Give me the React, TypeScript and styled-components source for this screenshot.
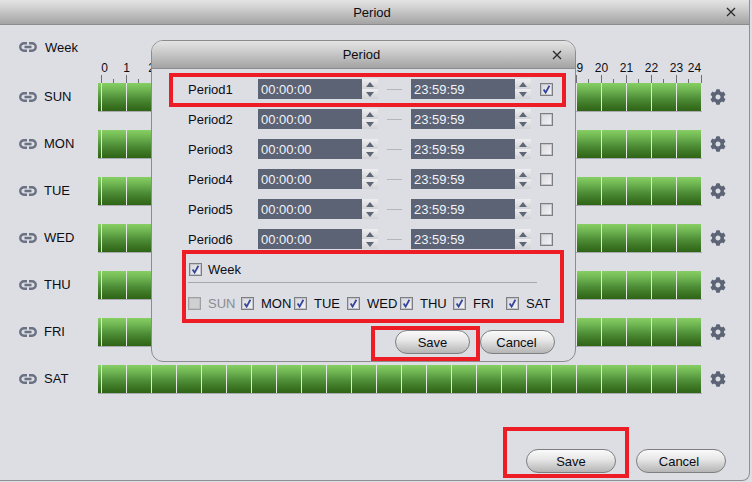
import React from "react";
import styled, { createGlobalStyle } from "styled-components";
import { FaCog } from "react-icons/fa";

const Global = createGlobalStyle`
  html, body { margin: 0; padding: 0; background: #dcdee3; }
  body { font-family: "Liberation Sans", Arial, sans-serif; font-size: 13px; color: #0c0c14; overflow: hidden; }
`;

const titleGradient = "linear-gradient(180deg, #e4e4e4 0%, #cfcfcf 35%, #a3a3a3 100%)";

const Window = styled.div`
  position: relative;
  width: 752px;
  height: 482px;
  overflow: hidden;
  box-sizing: border-box;
  background: #dcdee3;
`;
const Frame = styled.div`
  height: 481px;
  width: 750px;
  box-sizing: border-box;
  border-right: 1px solid #8f9094;
  border-bottom: 1px solid #8f9094;
  border-bottom-right-radius: 8px;
`;
const TitleBar = styled.div<{ $h: number; $inset: number }>`
  height: ${(p) => p.$h}px;
  box-sizing: border-box;
  border-bottom: 1px solid #8c8c8c;
  background: ${titleGradient};
  display: flex;
  align-items: center;
  justify-content: center;
  position: relative;
  padding-right: ${(p) => p.$inset}px;
  font-size: 13px;
`;
const Close = styled.svg<{ $right: number }>`
  position: absolute;
  right: ${(p) => p.$right}px;
  top: 50%;
  margin-top: -5px;
  width: 10px;
  height: 10px;
`;
const Main = styled.div`
  padding: 12px 0 0 19px;
`;
const WeekRow = styled.div`
  display: flex;
  align-items: center;
  height: 20px;
  font-size: 13px;
  gap: 8px;
`;
const LinkSvg = styled.svg`
  flex: none;
  width: 18px;
  height: 10px;
  color: #6a7182;
`;
const Ruler = styled.div`
  display: flex;
  margin: 1px 0 0 70px;
  height: 25px;
`;
const RulerCell = styled.div<{ $shift: number }>`
  width: 25px;
  flex: none;
  position: relative;
  height: 25px;
  box-sizing: border-box;
  padding-top: 3px;
  text-align: center;
  font-size: 12px;
  line-height: 14px;
  & > span {
    position: relative;
    left: ${(p) => p.$shift}px;
    display: block;
  }
`;
const Tick = styled.i`
  position: absolute;
  left: 12px;
  bottom: 0;
  height: 8px;
  width: 1px;
  background: #6b6f78;
`;
const MinorTick = styled.i`
  position: absolute;
  left: 24px;
  bottom: 0;
  height: 4px;
  width: 1px;
  background: #6b6f78;
`;
const Days = styled.div`
  display: flex;
  flex-direction: column;
  gap: 18px;
`;
const DayRow = styled.div`
  display: flex;
  align-items: center;
  height: 29px;
`;
const DayLabel = styled.div`
  width: 60px;
  display: flex;
  align-items: center;
  gap: 7px;
  flex: none;
  margin: 0 19px 2px 0;
  font-size: 13px;
  white-space: nowrap;
`;
const Bar = styled.div`
  display: flex;
  height: 28px;
  border-bottom: 1px solid #a9abb0;
  width: 604px;
  flex: none;
`;
const greenGradient = "linear-gradient(180deg, #86cf63 0%, #6fb552 25%, #4f8f38 55%, #3c7523 80%, #2f6416 100%)";
const Stub = styled.div`
  width: 3px;
  background: ${greenGradient};
`;
const Cell = styled.div`
  width: 24px;
  border-left: 1px solid #e4e6e2;
  background: ${greenGradient};
`;
const Gear = styled(FaCog)`
  margin: 0 0 2px 8px;
  width: 16px;
  height: 16px;
  color: #5c6476;
`;
const Footer = styled.div`
  display: flex;
  justify-content: flex-end;
  gap: 20px;
  margin: 55px 23px 0 0;
`;
const Button = styled.div<{ $w: number; $nudge?: number }>`
  width: ${(p) => p.$w}px;
  height: 24px;
  box-sizing: border-box;
  border: 1px solid #7f7f7f;
  border-radius: 12px;
  padding-right: ${(p) => p.$nudge ?? 0}px;
  background: linear-gradient(180deg, #fafafa 0%, #e8e8e8 40%, #b5b5b5 100%);
  display: flex;
  align-items: center;
  justify-content: center;
  font-size: 13px;
`;
const Dialog = styled.div`
  position: absolute;
  left: 151px;
  top: 40px;
  width: 425px;
  height: 322px;
  box-sizing: border-box;
  border: 1px solid #8c8c8c;
  border-radius: 12px;
  background: #dcdee3;
  overflow: hidden;
`;
const DialogBody = styled.div`
  padding: 5px 0 0 36px;
`;
const PeriodRow = styled.div`
  display: flex;
  align-items: center;
  height: 30px;
`;
const PeriodLabel = styled.div`
  width: 70px;
  flex: none;
  font-size: 13px;
`;
const TimeField = styled.div`
  width: 104px;
  height: 20px;
  flex: none;
  box-sizing: border-box;
  background: #5c6375;
  color: #f1f3f8;
  padding: 1px 0 0 3px;
  font-size: 13px;
  line-height: 20px;
`;
const Spinner = styled.div`
  width: 16px;
  height: 20px;
  flex: none;
  display: flex;
  flex-direction: column;
`;
const SpinBtn = styled.div<{ $up?: boolean }>`
  flex: 1;
  display: flex;
  align-items: center;
  justify-content: center;
  background: linear-gradient(180deg, #eeeef0 0%, #d2d3d6 100%);
  &::after {
    content: "";
    border-left: 4px solid transparent;
    border-right: 4px solid transparent;
    ${(p) => (p.$up ? "border-bottom: 5px solid #5f6678;" : "border-top: 5px solid #5f6678;")}
  }
`;
const Dash = styled.div`
  width: 15px;
  height: 1px;
  margin: 0 9px;
  background: #b4b6bb;
  flex: none;
`;
const Box = styled.div<{ $disabled?: boolean }>`
  width: 13px;
  height: 13px;
  flex: none;
  box-sizing: border-box;
  border: 1px solid ${(p) => (p.$disabled ? "#a0a0a0" : "#7d7e82")};
  box-shadow: inset 0 0 0 1px ${(p) => (p.$disabled ? "#c0c0c2" : "#c4c5ca")};
  background: ${(p) => (p.$disabled ? "#d0d0d2" : "linear-gradient(135deg, #d6d6dc 0%, #f6f6f8 100%)")};
  display: flex;
  align-items: center;
  justify-content: center;
`;
const CheckMark = styled.svg`
  width: 9px;
  height: 9px;
`;
const PeriodBox = styled.div`
  margin-left: 9px;
`;
const WeekHead = styled.div`
  display: flex;
  align-items: center;
  gap: 6px;
  margin: 7px 0 0 1px;
  height: 16px;
  font-size: 13px;
`;
const Divider = styled.div`
  width: 349px;
  height: 1px;
  background: #a6a7ab;
  margin: 5px 0 0 0;
`;
const DayGrid = styled.div`
  display: grid;
  grid-template-columns: repeat(7, 53px);
  margin-top: 12px;
  height: 16px;
`;
const DayCheck = styled.div<{ $disabled?: boolean }>`
  display: flex;
  align-items: center;
  gap: 7px;
  font-size: 13px;
  color: ${(p) => (p.$disabled ? "#8b8c90" : "#0c0c14")};
`;
const DialogButtons = styled.div`
  display: flex;
  gap: 10px;
  margin: 19px 0 0 207px;
`;
const RedBox = styled.div<{ $l: number; $t: number; $w: number; $h: number }>`
  position: absolute;
  left: ${(p) => p.$l}px;
  top: ${(p) => p.$t}px;
  width: ${(p) => p.$w}px;
  height: ${(p) => p.$h}px;
  box-sizing: border-box;
  border: 4px solid #ee1c25;
`;

const dayNames = ["SUN", "MON", "TUE", "WED", "THU", "FRI", "SAT"];
const hours = Array.from({ length: 25 }, (_, i) => i);
const cells = Array.from({ length: 24 }, (_, i) => i);

const LinkIcon = () => (
  <LinkSvg viewBox="0 0 18 10">
    <path
      d="M8 1.25H5a3.75 3.75 0 0 0 0 7.5H8M10 1.25H13a3.75 3.75 0 0 1 0 7.5H10M5.5 5H12.5"
      fill="none"
      stroke="currentColor"
      strokeWidth="2.4"
    />
  </LinkSvg>
);

const Check = ({ checked = true, disabled = false }: { checked?: boolean; disabled?: boolean }) => (
  <Box $disabled={disabled}>
    {checked && !disabled && (
      <CheckMark viewBox="0 0 9 9">
        <path d="M1.6 4.6 L3.6 7.6 L7.4 0.8" fill="none" stroke="#34469c" strokeWidth="1.8" />
      </CheckMark>
    )}
  </Box>
);

const Cross = ({ right }: { right: number }) => (
  <Close $right={right} viewBox="0 0 10 10">
    <path d="M1 1 L9 9 M9 1 L1 9" stroke="#2a2a2a" strokeWidth="1.3" fill="none" />
  </Close>
);

const Spin = () => (
  <Spinner>
    <SpinBtn $up />
    <SpinBtn />
  </Spinner>
);

export default function App() {
  return (
    <Window>
      <Global />
      <Frame>
        <TitleBar $h={25} $inset={5}>
          Period
          <Cross right={13} />
        </TitleBar>
        <Main>
          <WeekRow>
            <LinkIcon />
            Week
          </WeekRow>
          <Ruler>
            {hours.map((h) => (
              <RulerCell key={h} $shift={h === 0 ? 3 : h === 24 ? -7 : 0}>
                {(h < 3 || h > 18) && <span>{h}</span>}
                <Tick />
                {h < 24 && <MinorTick />}
              </RulerCell>
            ))}
          </Ruler>
          <Days>
            {dayNames.map((d) => (
              <DayRow key={d}>
                <DayLabel>
                  <LinkIcon />
                  {d}
                </DayLabel>
                <Bar>
                  <Stub />
                  {cells.map((c) => (
                    <Cell key={c} />
                  ))}
                </Bar>
                <Gear />
              </DayRow>
            ))}
          </Days>
          <Footer>
            <Button $w={90}>Save</Button>
            <Button $w={90} $nudge={4}>Cancel</Button>
          </Footer>
        </Main>
      </Frame>
      <Dialog>
        <TitleBar $h={28} $inset={4}>
          Period
          <Cross right={13} />
        </TitleBar>
        <DialogBody>
          {[1, 2, 3, 4, 5, 6].map((n) => (
            <PeriodRow key={n}>
              <PeriodLabel>Period{n}</PeriodLabel>
              <TimeField>00:00:00</TimeField>
              <Spin />
              <Dash />
              <TimeField>23:59:59</TimeField>
              <Spin />
              <PeriodBox>
                <Check checked={n === 1} />
              </PeriodBox>
            </PeriodRow>
          ))}
          <WeekHead>
            <Check />
            Week
          </WeekHead>
          <Divider />
          <DayGrid>
            {dayNames.map((d) => (
              <DayCheck key={d} $disabled={d === "SUN"}>
                <Check disabled={d === "SUN"} />
                {d}
              </DayCheck>
            ))}
          </DayGrid>
          <DialogButtons>
            <Button $w={75}>Save</Button>
            <Button $w={75} $nudge={2}>Cancel</Button>
          </DialogButtons>
        </DialogBody>
      </Dialog>
      <RedBox $l={169} $t={73} $w={397} $h={34} />
      <RedBox $l={182} $t={250} $w={382} $h={73} />
      <RedBox $l={371} $t={326} $w={109} $h={35} />
      <RedBox $l={503} $t={427} $w={126} $h={51} />
    </Window>
  );
}
